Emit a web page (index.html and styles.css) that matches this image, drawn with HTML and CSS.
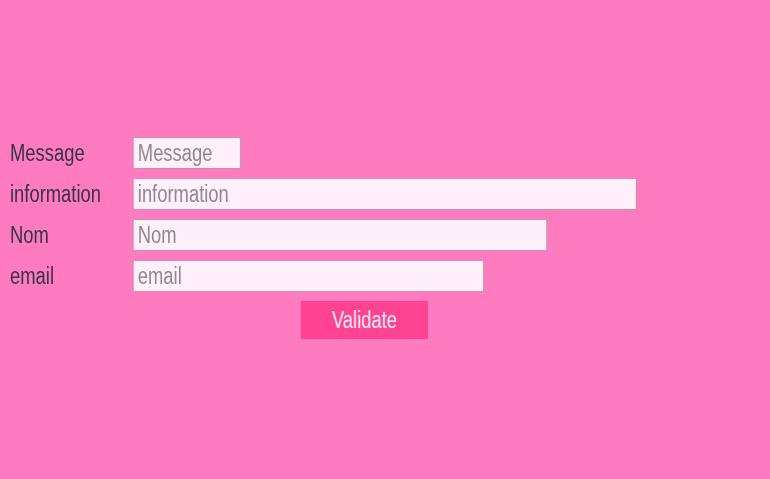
FILE: index.html
```html
<!DOCTYPE html>
<html>
<head>
<meta charset="utf-8">
<link rel="stylesheet" href="styles.css">
</head>
<body>
<form class="form">
  <div class="row">
    <label class="label">Message</label>
    <input class="field w-message" placeholder="Message">
  </div>
  <div class="row">
    <label class="label">information</label>
    <input class="field w-info" placeholder="information">
  </div>
  <div class="row">
    <label class="label">Nom</label>
    <input class="field w-nom" placeholder="Nom">
  </div>
  <div class="row">
    <label class="label">email</label>
    <input class="field w-email" placeholder="email">
  </div>
  <div class="actions">
    <button type="button" class="btn">Validate</button>
  </div>
</form>
</body>
</html>
```
FILE: styles.css
```css
html, body {
  margin: 0;
  padding: 0;
  background: #ff7bbf;
  height: 100%;
  overflow: hidden;
}
body {
  font-family: "Liberation Sans", Arial, sans-serif;
  font-size: 23px;
}
/* the whole form is rendered horizontally condensed, as in the reference */
.form {
  padding: 137px 0 0 12.5px;
  display: flex;
  flex-direction: column;
  gap: 9px;
  transform: scaleX(0.8);
  transform-origin: 0 0;
}
.row {
  display: flex;
  align-items: center;
  height: 32px;
  line-height: 26px;
}
.label {
  flex: none;
  width: 153.75px;
  color: #363447;
  font-size: 23px;
}
.field {
  flex: none;
  box-sizing: border-box;
  height: 32px;
  margin: 0;
  padding: 0 5px;
  border: 1px solid #c98aaa;
  border-radius: 2px;
  background: #fff0fa;
  font-family: "Liberation Sans", Arial, sans-serif;
  font-size: 23px;
  color: #333;
  outline: none;
}
.field::placeholder {
  color: #8c8a90;
}
.w-message { width: 135px; }
.w-info { width: 630px; }
.w-nom { width: 517.5px; }
.w-email { width: 438.75px; }
.actions {
  display: flex;
  padding-left: 363.75px;
}
.btn {
  width: 158.75px;
  height: 38px;
  border: none;
  margin: 0;
  padding: 0;
  background: #ff4292;
  color: #f6eaf1;
  font-family: "Liberation Sans", Arial, sans-serif;
  font-size: 23px;
  line-height: 26px;
  cursor: pointer;
}
```
